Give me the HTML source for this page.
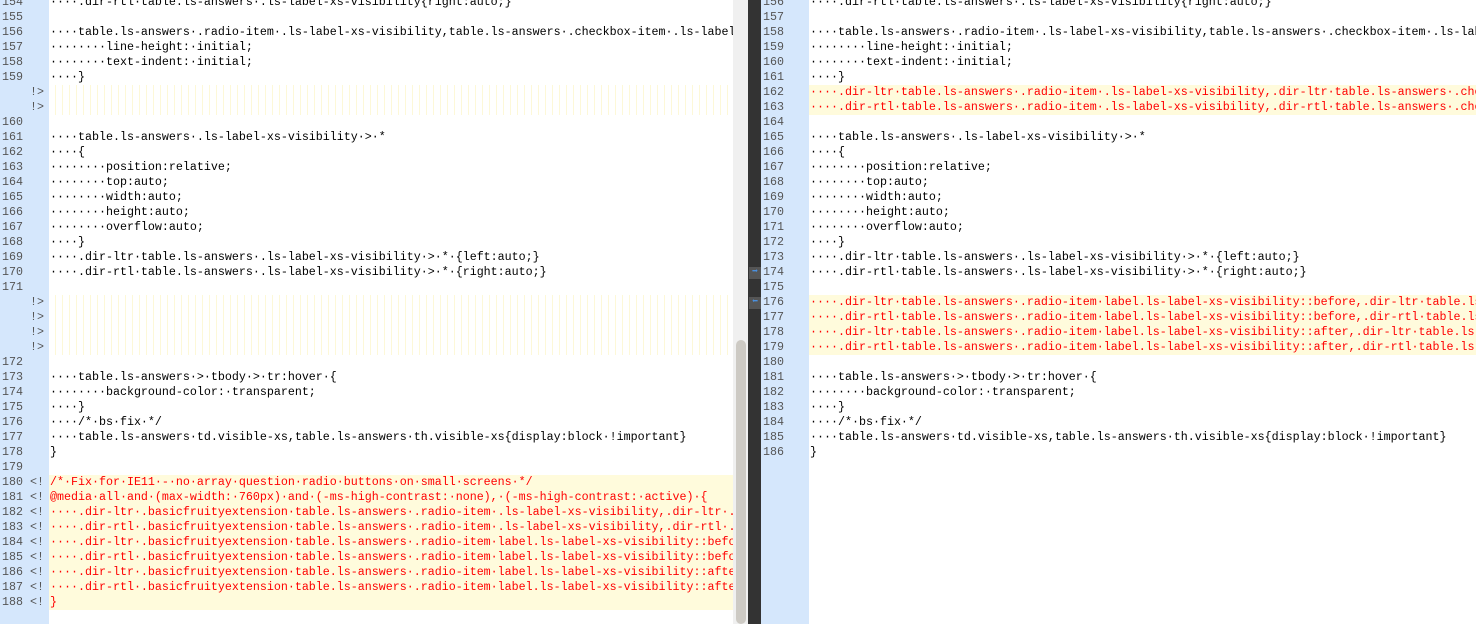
<!DOCTYPE html>
<html style="width:1476px;height:624px;overflow:hidden"><head><meta charset="utf-8"><style>
*{margin:0;padding:0;box-sizing:border-box}
body{width:1476px;height:624px;overflow:hidden;background:#fff;font-family:"Liberation Mono",monospace;font-size:11.67px;position:relative}
.pane{position:absolute;top:0;height:624px;overflow:hidden}
.gut{position:absolute;top:0;height:624px;background:#d5e7fc}
.row{position:absolute;left:0;height:15px;line-height:15px;white-space:pre;width:100%}
.ln{position:absolute;height:15px;line-height:15px;color:#555;white-space:pre}
.y{background:#fffbdc}
.r{color:#f00}
.h{background:repeating-linear-gradient(90deg,#fff 0 6px,#fdf8d8 6px 7px)}
#G{position:absolute;left:0;top:0;width:1476px;height:624px;overflow:hidden}
</style></head><body>
<div class="gut" style="left:0;width:49px"></div>
<div class="pane" style="left:49px;width:684px" id="L"></div>
<div style="position:absolute;left:733px;top:0;width:15px;height:624px;background:#f0f0f0"></div>
<div style="position:absolute;left:736px;top:340px;width:10px;height:284px;background:#cdcac4;border-radius:5px"></div>
<div style="position:absolute;left:748px;top:0;width:13px;height:624px;background:#333"></div>
<div style="position:absolute;left:749px;top:267px;width:12px;height:12px;background:#555;color:#4a90e0;font-size:10px;line-height:12px;text-align:center">➡</div>
<div style="position:absolute;left:749px;top:297px;width:12px;height:12px;background:#555;color:#4a90e0;font-size:10px;line-height:12px;text-align:center">⬅</div>
<div class="gut" style="left:761px;width:48px"></div>
<div class="pane" style="left:809px;width:667px" id="R"></div>
<div id="G"></div>
<script>
function esc(s){return (s||'').replace(/&/g,'&amp;').replace(/</g,'&lt;').replace(/>/g,'&gt;');}
function put(pid,gx,rows){
  var p=document.getElementById(pid),g=document.getElementById('G'),h='',gh='';
  rows.forEach(function(r,i){
    var top=-5+15*i;
    var cls=r.c||'';
    h+='<div class="row '+cls+'" style="top:'+top+'px;padding-left:1px">'+esc(r.t)+'</div>';
    if(r.n)gh+='<div class="ln" style="left:'+gx+'px;top:'+top+'px">'+esc(r.n)+'</div>';
  });
  p.innerHTML=h;g.innerHTML+=gh;
}
var L=[
{n:'154',t:'····.dir-rtl·table.ls-answers·.ls-label-xs-visibility{right:auto;}'},
{n:'155',t:''},
{n:'156',t:'····table.ls-answers·.radio-item·.ls-label-xs-visibility,table.ls-answers·.checkbox-item·.ls-label'},
{n:'157',t:'········line-height:·initial;'},
{n:'158',t:'········text-indent:·initial;'},
{n:'159',t:'····}'},
{n:'    !>',c:'h',t:''},
{n:'    !>',c:'h',t:''},
{n:'160',t:''},
{n:'161',t:'····table.ls-answers·.ls-label-xs-visibility·>·*'},
{n:'162',t:'····{'},
{n:'163',t:'········position:relative;'},
{n:'164',t:'········top:auto;'},
{n:'165',t:'········width:auto;'},
{n:'166',t:'········height:auto;'},
{n:'167',t:'········overflow:auto;'},
{n:'168',t:'····}'},
{n:'169',t:'····.dir-ltr·table.ls-answers·.ls-label-xs-visibility·>·*·{left:auto;}'},
{n:'170',t:'····.dir-rtl·table.ls-answers·.ls-label-xs-visibility·>·*·{right:auto;}'},
{n:'171',t:''},
{n:'    !>',c:'h',t:''},
{n:'    !>',c:'h',t:''},
{n:'    !>',c:'h',t:''},
{n:'    !>',c:'h',t:''},
{n:'172',t:''},
{n:'173',t:'····table.ls-answers·>·tbody·>·tr:hover·{'},
{n:'174',t:'········background-color:·transparent;'},
{n:'175',t:'····}'},
{n:'176',t:'····/*·bs·fix·*/'},
{n:'177',t:'····table.ls-answers·td.visible-xs,table.ls-answers·th.visible-xs{display:block·!important}'},
{n:'178',t:'}'},
{n:'179',t:''},
{n:'180 <!',c:'y r',t:'/*·Fix·for·IE11·-·no·array·question·radio·buttons·on·small·screens·*/'},
{n:'181 <!',c:'y r',t:'@media·all·and·(max-width:·760px)·and·(-ms-high-contrast:·none),·(-ms-high-contrast:·active)·{'},
{n:'182 <!',c:'y r',t:'····.dir-ltr·.basicfruityextension·table.ls-answers·.radio-item·.ls-label-xs-visibility,.dir-ltr·.'},
{n:'183 <!',c:'y r',t:'····.dir-rtl·.basicfruityextension·table.ls-answers·.radio-item·.ls-label-xs-visibility,.dir-rtl·.'},
{n:'184 <!',c:'y r',t:'····.dir-ltr·.basicfruityextension·table.ls-answers·.radio-item·label.ls-label-xs-visibility::before'},
{n:'185 <!',c:'y r',t:'····.dir-rtl·.basicfruityextension·table.ls-answers·.radio-item·label.ls-label-xs-visibility::before'},
{n:'186 <!',c:'y r',t:'····.dir-ltr·.basicfruityextension·table.ls-answers·.radio-item·label.ls-label-xs-visibility::after'},
{n:'187 <!',c:'y r',t:'····.dir-rtl·.basicfruityextension·table.ls-answers·.radio-item·label.ls-label-xs-visibility::after'},
{n:'188 <!',c:'y r',t:'}'}
];
var R=[
{n:'156',t:'····.dir-rtl·table.ls-answers·.ls-label-xs-visibility{right:auto;}'},
{n:'157',t:''},
{n:'158',t:'····table.ls-answers·.radio-item·.ls-label-xs-visibility,table.ls-answers·.checkbox-item·.ls-label'},
{n:'159',t:'········line-height:·initial;'},
{n:'160',t:'········text-indent:·initial;'},
{n:'161',t:'····}'},
{n:'162',c:'y r',t:'····.dir-ltr·table.ls-answers·.radio-item·.ls-label-xs-visibility,.dir-ltr·table.ls-answers·.checkbox'},
{n:'163',c:'y r',t:'····.dir-rtl·table.ls-answers·.radio-item·.ls-label-xs-visibility,.dir-rtl·table.ls-answers·.checkbox'},
{n:'164',t:''},
{n:'165',t:'····table.ls-answers·.ls-label-xs-visibility·>·*'},
{n:'166',t:'····{'},
{n:'167',t:'········position:relative;'},
{n:'168',t:'········top:auto;'},
{n:'169',t:'········width:auto;'},
{n:'170',t:'········height:auto;'},
{n:'171',t:'········overflow:auto;'},
{n:'172',t:'····}'},
{n:'173',t:'····.dir-ltr·table.ls-answers·.ls-label-xs-visibility·>·*·{left:auto;}'},
{n:'174',t:'····.dir-rtl·table.ls-answers·.ls-label-xs-visibility·>·*·{right:auto;}'},
{n:'175',t:''},
{n:'176',c:'y r',t:'····.dir-ltr·table.ls-answers·.radio-item·label.ls-label-xs-visibility::before,.dir-ltr·table.ls-answers'},
{n:'177',c:'y r',t:'····.dir-rtl·table.ls-answers·.radio-item·label.ls-label-xs-visibility::before,.dir-rtl·table.ls-answers'},
{n:'178',c:'y r',t:'····.dir-ltr·table.ls-answers·.radio-item·label.ls-label-xs-visibility::after,.dir-ltr·table.ls-answers'},
{n:'179',c:'y r',t:'····.dir-rtl·table.ls-answers·.radio-item·label.ls-label-xs-visibility::after,.dir-rtl·table.ls-answers'},
{n:'180',t:''},
{n:'181',t:'····table.ls-answers·>·tbody·>·tr:hover·{'},
{n:'182',t:'········background-color:·transparent;'},
{n:'183',t:'····}'},
{n:'184',t:'····/*·bs·fix·*/'},
{n:'185',t:'····table.ls-answers·td.visible-xs,table.ls-answers·th.visible-xs{display:block·!important}'},
{n:'186',t:'}'}
];
put('L',2,L);put('R',763,R);
</script>
</body></html>
